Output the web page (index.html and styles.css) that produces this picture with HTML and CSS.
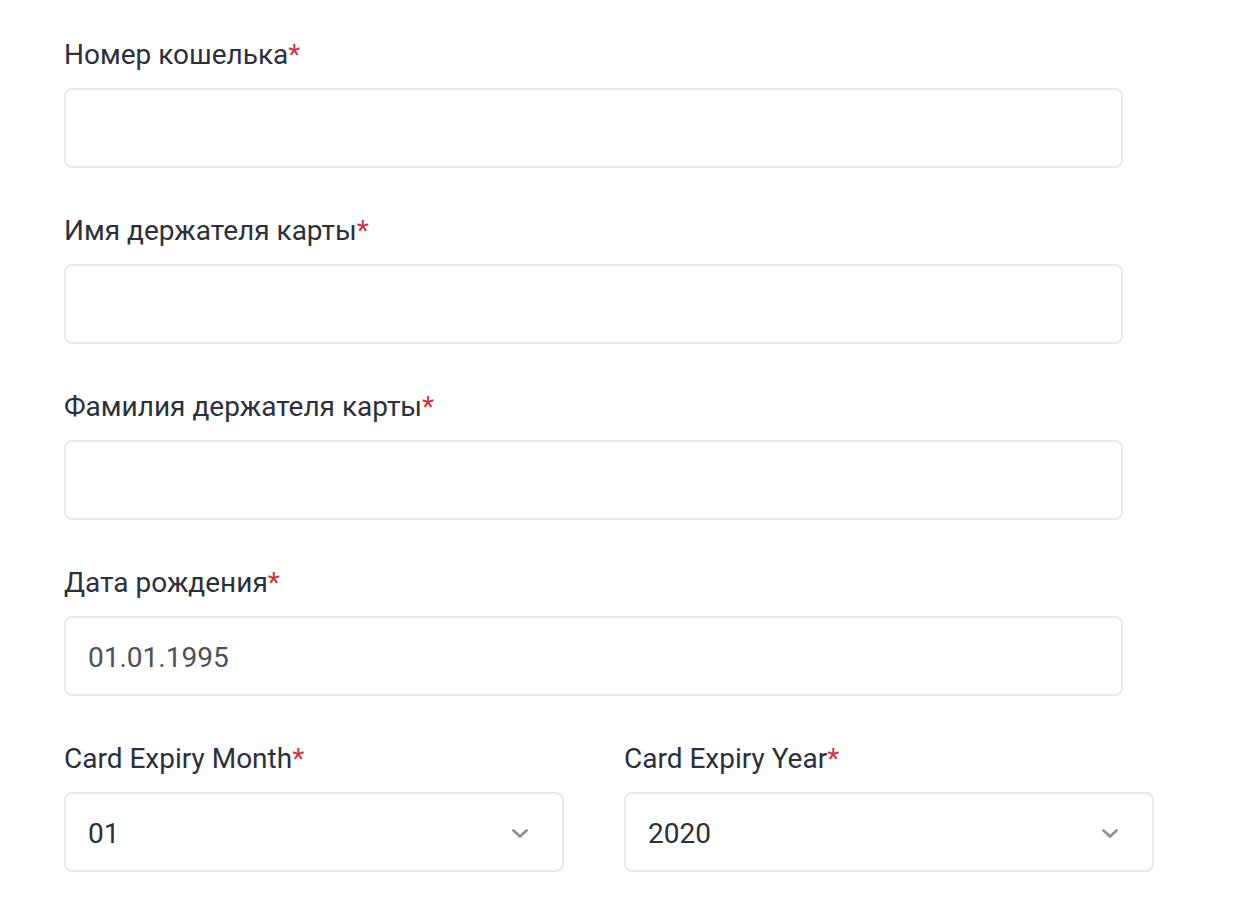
FILE: index.html
```html
<!DOCTYPE html>
<html>

<head lang="ru">
    <meta charset="utf-8" />
    <meta name="viewport" content="width=device-width, initial-scale=1" />
    <title>Card details</title>
    <link rel="stylesheet" href="styles.css">
</head>

<body>
    <form class="card-form">
        <div class="field">
            <label class="label">Номер кошелька<span class="req">*</span></label>
            <div class="input"></div>
        </div>
        <div class="field">
            <label class="label">Имя держателя карты<span class="req">*</span></label>
            <div class="input"></div>
        </div>
        <div class="field">
            <label class="label">Фамилия держателя карты<span class="req">*</span></label>
            <div class="input"></div>
        </div>
        <div class="field">
            <label class="label">Дата рождения<span class="req">*</span></label>
            <div class="input placeholder">01.01.1995</div>
        </div>
        <div class="row">
            <div class="field">
                <label class="label">Card Expiry Month<span class="req">*</span></label>
                <div class="input select">
                    <span>01</span>
                    <svg class="chevron" viewBox="0 0 18 11" width="18" height="11">
                        <path d="M2.5 2.5 L9 8.5 L15.5 2.5" fill="none" stroke="#8d9096" stroke-width="2.8" stroke-linecap="round" stroke-linejoin="round" />
                    </svg>
                </div>
            </div>
            <div class="field">
                <label class="label">Card Expiry Year<span class="req">*</span></label>
                <div class="input select">
                    <span>2020</span>
                    <svg class="chevron" viewBox="0 0 18 11" width="18" height="11">
                        <path d="M2.5 2.5 L9 8.5 L15.5 2.5" fill="none" stroke="#8d9096" stroke-width="2.8" stroke-linecap="round" stroke-linejoin="round" />
                    </svg>
                </div>
            </div>
        </div>
    </form>
</body>

</html>
```

FILE: styles.css
```css
body {
    margin: 0;
    background-color: #fff;
    font-family: Roboto, "Liberation Sans", sans-serif;
    color: #2b303b;
}

.card-form {
    width: 1059px;
    padding: 36px 0 0 64px;
}

.field {
    display: flex;
    flex-direction: column;
    margin-bottom: 44px;
}

.label {
    font-size: 28px;
    line-height: 38px;
    margin-bottom: 14px;
}

.req {
    color: #d1343f;
}

.input {
    box-sizing: border-box;
    height: 80px;
    border: 2px solid #e8e9eb;
    border-radius: 8px;
    display: flex;
    align-items: center;
    padding: 2px 22px 0 22px;
    font-size: 28px;
}

.placeholder {
    color: #4b5059;
}

.row {
    display: grid;
    grid-template-columns: 500px 530px;
    column-gap: 60px;
}

.select {
    justify-content: space-between;
    color: #2b303b;
}

.chevron {
    margin-right: 11px;
}
```
